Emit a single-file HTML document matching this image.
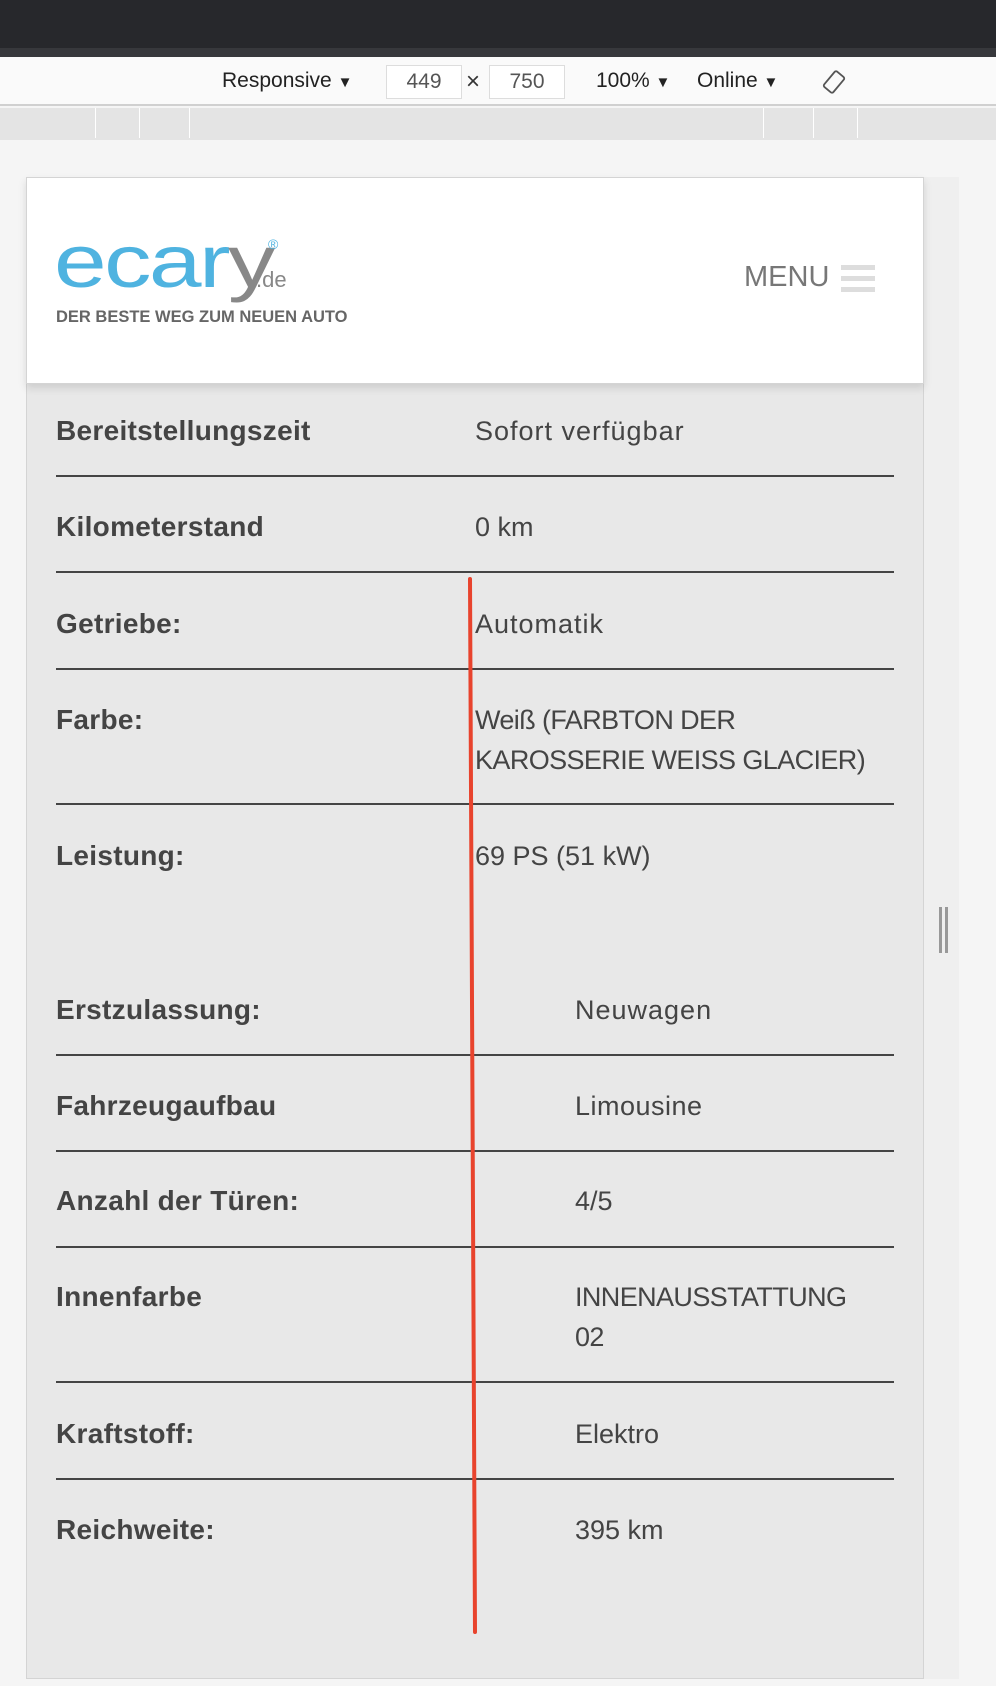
<!DOCTYPE html>
<html><head><meta charset="utf-8"><style>
*{margin:0;padding:0;box-sizing:border-box}
body{width:996px;height:1686px;background:#f5f5f5;font-family:"Liberation Sans",sans-serif;position:relative;overflow:hidden}
.a{position:absolute}
.tb{font-size:21px;color:#222;top:69px}
.box{top:65px;height:34px;width:76px;border:1px solid #ddd;background:#fff;font-size:21px;color:#555;text-align:center;line-height:32px}
.lbl{left:56px;font-size:28px;font-weight:bold;color:#444;line-height:40px;letter-spacing:0.3px}
.val{font-size:27px;color:#444;line-height:40px}
.ln{left:56px;width:838px;height:2px;background:#444}
</style></head><body>
<div class="a" style="left:0;top:0;width:996px;height:48px;background:#27282c"></div>
<div class="a" style="left:0;top:48px;width:996px;height:9px;background:#37383c"></div>
<div class="a" style="left:0;top:57px;width:996px;height:48px;background:#fafafa"></div>
<div class="a" style="left:0;top:104px;width:996px;height:2px;background:#d0d0d0"></div>
<div class="a" style="left:0;top:108px;width:996px;height:32px;background:#e4e4e4"></div>
<div class="a" style="left:95px;top:108px;width:1px;height:30px;background:#fff"></div>
<div class="a" style="left:139px;top:108px;width:1px;height:30px;background:#fff"></div>
<div class="a" style="left:189px;top:108px;width:1px;height:30px;background:#fff"></div>
<div class="a" style="left:763px;top:108px;width:1px;height:30px;background:#fff"></div>
<div class="a" style="left:813px;top:108px;width:1px;height:30px;background:#fff"></div>
<div class="a" style="left:857px;top:108px;width:1px;height:30px;background:#fff"></div>
<div class="a tb" style="left:222px">Responsive <span style="font-size:15px">▼</span></div>
<div class="a box" style="left:386px">449</div>
<div class="a tb" style="left:466px;color:#333;font-size:24px;top:68px">×</div>
<div class="a box" style="left:489px">750</div>
<div class="a tb" style="left:596px">100% <span style="font-size:15px">▼</span></div>
<div class="a tb" style="left:697px">Online <span style="font-size:15px">▼</span></div>
<svg class="a" style="left:821px;top:68px" width="26" height="28" viewBox="0 0 26 28"><rect x="7" y="4" width="12" height="20" rx="2" transform="rotate(40 13 14)" fill="none" stroke="#555" stroke-width="1.8"/></svg>
<div class="a" style="left:924px;top:177px;width:35px;height:1502px;background:#efefef"></div>
<div class="a" style="left:26px;top:177px;width:898px;height:1502px;background:#e8e8e8;border:1px solid #d4d4d4"></div>
<div class="a" style="left:26px;top:177px;width:898px;height:207px;background:#fff;border:1px solid #d4d4d4;box-shadow:0 4px 8px rgba(0,0,0,.12)"></div>
<div class="a" style="left:54px;top:222px;font-size:74px;color:#4fb3e0;letter-spacing:-2px;line-height:80px;transform:scaleX(1.28);transform-origin:0 0">ecar<span style="color:#888">y</span></div>
<div class="a" style="left:256px;top:267px;font-size:22px;color:#888">.de</div>
<div class="a" style="left:268px;top:236px;font-size:14px;color:#4fb3e0">®</div>
<div class="a" style="left:56px;top:308px;font-size:16.5px;font-weight:bold;color:#666;letter-spacing:0px">DER BESTE WEG ZUM NEUEN AUTO</div>
<div class="a" style="left:744px;top:261px;font-size:29px;color:#777">MENU</div>
<div class="a" style="left:841px;top:265px;width:34px;height:5px;background:#ddd"></div>
<div class="a" style="left:841px;top:276px;width:34px;height:5px;background:#ddd"></div>
<div class="a" style="left:841px;top:287px;width:34px;height:5px;background:#ddd"></div>

<div class="a lbl" style="top:411px">Bereitstellungszeit</div><div class="a val" style="left:475px;top:411px;letter-spacing:1px">Sofort verfügbar</div>
<div class="a ln" style="top:475px"></div>
<div class="a lbl" style="top:507px">Kilometerstand</div><div class="a val" style="left:475px;top:507px">0 km</div>
<div class="a ln" style="top:571px"></div>
<div class="a lbl" style="top:604px">Getriebe:</div><div class="a val" style="left:475px;top:604px;letter-spacing:1px">Automatik</div>
<div class="a ln" style="top:668px"></div>
<div class="a lbl" style="top:700px">Farbe:</div><div class="a val" style="left:475px;top:700px;letter-spacing:-0.6px">Weiß (FARBTON DER<br>KAROSSERIE WEISS GLACIER)</div>
<div class="a ln" style="top:803px"></div>
<div class="a lbl" style="top:836px">Leistung:</div><div class="a val" style="left:475px;top:836px">69 PS (51 kW)</div>
<div class="a lbl" style="top:990px">Erstzulassung:</div><div class="a val" style="left:575px;top:990px;letter-spacing:1px">Neuwagen</div>
<div class="a ln" style="top:1054px"></div>
<div class="a lbl" style="top:1086px">Fahrzeugaufbau</div><div class="a val" style="left:575px;top:1086px;letter-spacing:0.5px">Limousine</div>
<div class="a ln" style="top:1150px"></div>
<div class="a lbl" style="top:1181px">Anzahl der Türen:</div><div class="a val" style="left:575px;top:1181px">4/5</div>
<div class="a ln" style="top:1246px"></div>
<div class="a lbl" style="top:1277px">Innenfarbe</div><div class="a val" style="left:575px;top:1277px;letter-spacing:-0.6px">INNENAUSSTATTUNG<br>02</div>
<div class="a ln" style="top:1381px"></div>
<div class="a lbl" style="top:1414px">Kraftstoff:</div><div class="a val" style="left:575px;top:1414px">Elektro</div>
<div class="a ln" style="top:1478px"></div>
<div class="a lbl" style="top:1510px">Reichweite:</div><div class="a val" style="left:575px;top:1510px">395 km</div>
<svg class="a" style="left:0;top:0" width="996" height="1686"><line x1="470" y1="579" x2="475" y2="1632" stroke="#e8432d" stroke-width="4" stroke-linecap="round"/></svg>
<div class="a" style="left:939px;top:907px;width:3px;height:46px;background:#999"></div>
<div class="a" style="left:945px;top:907px;width:3px;height:46px;background:#999"></div>
</body></html>
